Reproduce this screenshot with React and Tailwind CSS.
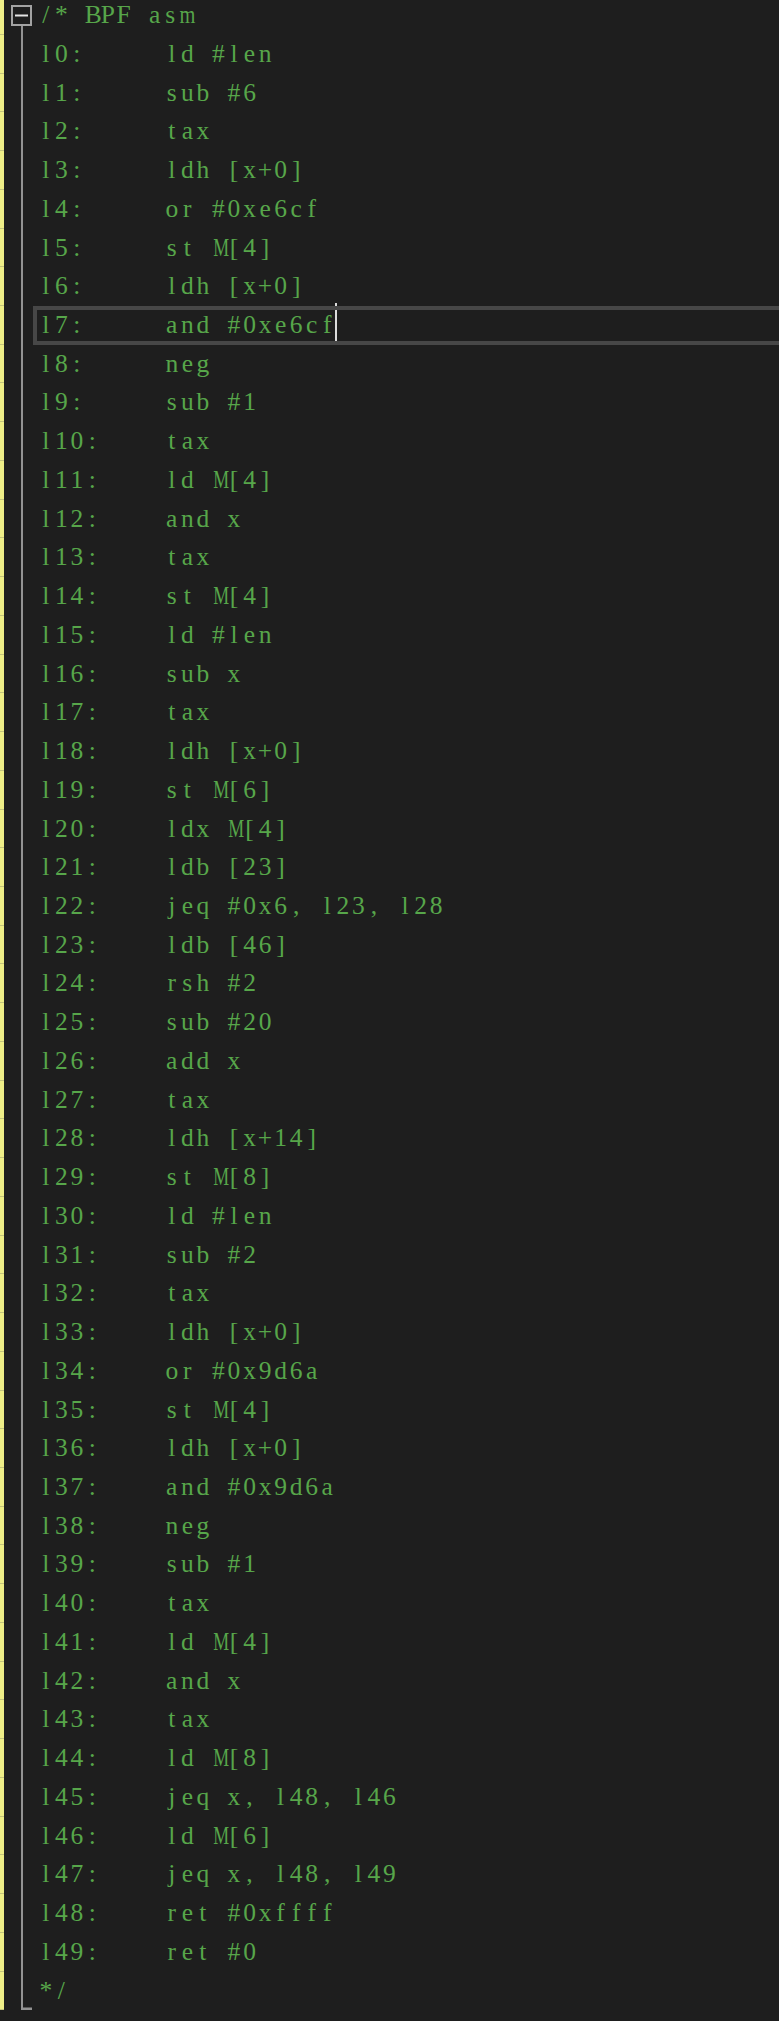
import React from 'react';

const lines = [
  'ld #len', 'sub #6', 'tax', 'ldh [x+0]', 'or #0xe6cf', 'st M[4]',
  'ldh [x+0]', 'and #0xe6cf', 'neg', 'sub #1', 'tax', 'ld M[4]',
  'and x', 'tax', 'st M[4]', 'ld #len', 'sub x', 'tax',
  'ldh [x+0]', 'st M[6]', 'ldx M[4]', 'ldb [23]', 'jeq #0x6, l23, l28',
  'ldb [46]', 'rsh #2', 'sub #20', 'add x', 'tax', 'ldh [x+14]',
  'st M[8]', 'ld #len', 'sub #2', 'tax', 'ldh [x+0]', 'or #0x9d6a',
  'st M[4]', 'ldh [x+0]', 'and #0x9d6a', 'neg', 'sub #1', 'tax',
  'ld M[4]', 'and x', 'tax', 'ld M[8]', 'jeq x, l48, l46', 'ld M[6]',
  'jeq x, l48, l49', 'ret #0xffff', 'ret #0',
];

// wide serif glyphs get squeezed into their cell
const squeeze = { M: 'scale-x-[0.7]', m: 'scale-x-[0.8]' };

// serif font in fixed-width cells, like the editor's monospace serif
const Mono = ({ text }) => (
  <span className="whitespace-pre">
    {[...text].map((c, i) => (
      <span key={i} className={`inline-block w-[15.55px] text-center ${squeeze[c] || ''}`}>
        {c}
      </span>
    ))}
  </span>
);

// fold gutter drawing: 'open' | 'line' | 'end'
const Fold = ({ kind }) => (
  <svg width="29" height="39" viewBox="0 0 29 39" className="block">
    {kind === 'open' && (
      <>
        <rect x="8" y="10" width="19" height="19" fill="none" stroke="#a3a3a3" strokeWidth="2" />
        <rect x="11" y="18.5" width="13" height="2" fill="#e4e4e4" />
        <rect x="17" y="30" width="2" height="9" fill="#939393" />
      </>
    )}
    {kind === 'line' && <rect x="17" y="0" width="2" height="39" fill="#939393" />}
    {kind === 'end' && (
      <>
        <rect x="17" y="0" width="2" height="38.5" fill="#939393" />
        <rect x="17" y="35.5" width="11" height="3" fill="#939393" />
      </>
    )}
  </svg>
);

const Row = ({ fold, children, active }) => (
  <div className="relative flex h-[38.74px] items-center">
    <div className="h-full w-[4px] shrink-0 border-b border-[#c4c47c] bg-[#eeee88]" />
    <div className="h-full w-[29px] shrink-0 overflow-hidden">
      <Fold kind={fold} />
    </div>
    <div className="pl-[5px] whitespace-pre">{children}</div>
    {active && (
      <div className="pointer-events-none absolute left-[33px] right-[-10px] top-0 h-[39px] border-[4px] border-[#474747]" />
    )}
  </div>
);

export default function App() {
  return (
    <div className="min-h-[2021px] w-full overflow-hidden bg-[#1e1e1e]">
      <div
        className="-mt-[3.9px] text-[25.5px] leading-[38.74px] text-[#57a64a]"
        style={{ fontFamily: '"Liberation Serif", "DejaVu Serif", serif' }}
      >
        <Row fold="open">
          <Mono text="/* BPF asm" />
        </Row>
        {lines.map((op, i) => (
          <Row key={i} fold="line" active={i === 7}>
            <span className="inline-block w-[126px]">
              <Mono text={`l${i}:`} />
            </span>
            <span className="relative">
              <Mono text={op} />
              {i === 7 && (
                <span className="absolute -right-[2px] top-[-7px] h-[39px] w-[2px] bg-[#dcdcdc]" />
              )}
            </span>
          </Row>
        ))}
        <Row fold="end">
          <Mono text="*/" />
        </Row>
      </div>
    </div>
  );
}
